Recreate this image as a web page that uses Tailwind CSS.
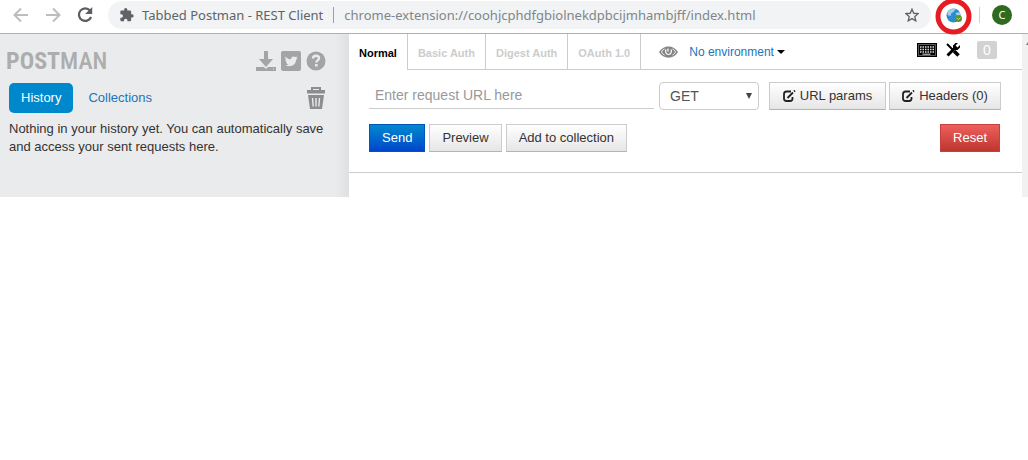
<!DOCTYPE html>
<html lang="en">
<head>
<meta charset="utf-8">
<meta name="viewport" content="width=device-width, initial-scale=1">
<title>Tabbed Postman - REST Client</title>
<script src="https://cdn.jsdelivr.net/npm/@tailwindcss/browser@4"></script>
</head>
<body class="bg-white font-['Liberation_Sans',Arial,sans-serif] text-[13px] leading-[18px] text-[#333]">

<!-- Browser toolbar -->
<header class="flex h-[34px] items-center border-b border-[#b0b0b4] pb-1 pl-[13px] pr-4 font-['Noto_Sans',sans-serif]">
  <button aria-label="Back" class="mr-4 shrink-0"><svg width="16" height="16" viewBox="0 0 16 16" fill="none" stroke="#bdbdbd" stroke-width="2"><path d="M15 8H2M8 1.500 1.500 8 8 14.500"/></svg></button>
  <button aria-label="Forward" class="mr-4 shrink-0"><svg width="16" height="16" viewBox="0 0 16 16" fill="none" stroke="#bdbdbd" stroke-width="2"><path d="M1 8h13M8 1.500 14.500 8 8 14.500"/></svg></button>
  <button aria-label="Reload" class="mr-[15px] shrink-0"><svg width="16" height="16" viewBox="0 0 16 16"><path d="M13 3.500A6.300 6.300 0 1 0 14.100 10" fill="none" stroke="#5a5d61" stroke-width="2.200"/><path d="M15.200 0v7H8.200z" fill="#5a5d61"/></svg></button>
  <div class="flex h-7 min-w-0 flex-1 items-center rounded-full bg-[#f1f3f4] px-3">
    <svg class="mr-2 shrink-0" width="14" height="14" viewBox="2 1 21 22" fill="#5f6368"><path d="M20.500 11H19V7c0-1.100-.9-2-2-2h-4V3.500a2.500 2.500 0 0 0-5 0V5H4c-1.100 0-2 .9-2 2v3.800h1.500a2.700 2.700 0 0 1 0 5.400H2V20c0 1.100.9 2 2 2h3.800v-1.500a2.700 2.700 0 0 1 5.400 0V22H17c1.100 0 2-.9 2-2v-4h1.500a2.500 2.500 0 0 0 0-5z"/></svg>
    <span class="whitespace-nowrap text-[13px] text-[#5f6368]">Tabbed Postman - REST Client</span>
    <span class="ml-[10px] mr-[10px] h-4 w-px bg-[#9aa0a6]"></span>
    <input aria-label="Address" class="h-6 min-w-0 flex-1 bg-transparent text-[13px] leading-6 text-[#80868b] outline-none" value="chrome-extension://coohjcphdfgbiolnekdpbcijmhambjff/index.html">
    <button aria-label="Bookmark"><svg width="14" height="14" viewBox="0 0 24 24" fill="none" stroke="#5f6368" stroke-width="2.300"><path d="m12 2 3 7 7.500.7-5.700 5 1.700 7.300L12 18.100 5.500 22l1.700-7.300-5.700-5L9 9z"/></svg></button>
  </div>
  <button aria-label="Postman extension" class="relative ml-1 h-7 w-9 shrink-0"><svg class="absolute left-0 -top-1 z-10" width="38" height="40" viewBox="0 0 38 40"><circle cx="18.500" cy="19.500" r="15.500" fill="#fff" stroke="#e51c23" stroke-width="5"/><circle cx="18.500" cy="18.500" r="7" fill="#2d8ccf"/><path d="M12.500 15c2-3 5-4 8-3l-2 3-2 1-1 3-3-1zM20.500 16l4-1 1 4-3 1z" fill="#9ed0ee"/><circle cx="23.500" cy="21.500" r="3.500" fill="#57932f"/><path d="m21.500 21 2 1.500 2-2" fill="none" stroke="#b9da8c"/></svg></button>
  <span class="mx-2 h-4 w-px bg-[#cfd1d4]"></span>
  <button class="ml-1 size-5 shrink-0 rounded-full bg-[#2f6b1e] text-[11px] leading-5 text-white">C</button>
</header>

<div class="flex">
  <!-- Sidebar -->
  <aside class="w-[349px] shrink-0 bg-linear-to-r from-[#eaebec] from-96% to-[#dfe0e1] pb-[41px]">
    <div class="flex h-[37px] items-end justify-between pl-[6px] pr-[23px] pt-3">
      <h1 class="whitespace-nowrap font-['Roboto_Condensed','Liberation_Sans_Narrow',sans-serif] text-[24px] font-medium leading-5 text-[#adadad]"><b>POST</b>MAN</h1>
      <div class="flex gap-[5px]">
        <button aria-label="Download"><svg width="20" height="20" viewBox="0 0 20 20" fill="#a4a4a4"><path d="M8 0h4v8h5l-7 8-7-8h5z"/><path d="M0 16h8l2 2 2-2h8v4H0zM17 17.500v1h1v-1z" fill-rule="evenodd"/></svg></button>
        <a href="#" aria-label="Twitter"><svg width="20" height="20" viewBox="0 0 20 20"><rect width="20" height="20" rx="2" fill="#a4a4a4"/><path d="M4.500 5.500c2 2.300 3.500 2.800 5.500 2.800 0-2.800 2.500-3.600 4.300-2.300l2-.5-1 1.800 1.200.2-1.500 1.500C15 14 9 17 4.500 14c1.500 0 2.500-.4 3-1-1.500 0-2.200-.8-2.500-1.800h1.200C4.800 10.700 4.300 9.500 4.300 8.500l1 .2C4.300 7.800 4 6.500 4.500 5.500z" fill="#eaebec"/></svg></a>
        <button aria-label="Help"><svg width="20" height="20" viewBox="0 0 20 20" fill="none"><circle cx="10" cy="10" r="9.500" fill="#a4a4a4"/><path d="M7 7.500C7 3.800 13 4 13 7.300c0 2.200-2.700 2-2.700 4.200" stroke="#eaebec" stroke-width="2.400"/><path d="M9 13h2.600v2.500H9z" fill="#eaebec"/></svg></button>
      </div>
    </div>
    <div class="mt-3 flex h-[30px] items-center pl-[9px] pr-6">
      <button class="h-[30px] rounded-[5px] bg-[#0088cc] px-3 text-white">History</button>
      <button class="ml-[3px] px-3 text-[#1a75bb]">Collections</button>
      <button aria-label="Delete history" class="ml-auto"><svg width="18" height="22" viewBox="0 0 18 22" fill="none"><path d="M5 3V1h8v2" stroke="#8d8d8d" stroke-width="2"/><path d="M0 3h18v3.500H0zM1 8h16l-2 14H3z" fill="#8d8d8d"/><path d="m5.500 11 .7 8.500M9 11v8.500M12.500 11l-.7 8.500" stroke="#eaebec" stroke-width="1.400"/></svg></button>
    </div>
    <p class="mt-[7px] pl-[9px] pr-5">Nothing in your history yet. You can automatically save and access your sent requests here.</p>
  </aside>

  <!-- Request builder -->
  <main class="min-w-0 flex-1">
    <nav class="flex h-9 text-[11px] font-bold text-[#ccc]">
      <button class="border-r border-[#ccc] px-[10px] pt-[2px] text-black">Normal</button>
      <button class="border-r border-b border-[#ccc] px-[10px] pt-[2px]">Basic Auth</button>
      <button class="border-r border-b border-[#ccc] px-[10px] pt-[2px]">Digest Auth</button>
      <button class="border-r border-b border-[#ccc] px-[10px] pt-[2px]">OAuth 1.0</button>
      <div class="flex flex-1 items-center border-b border-[#ccc] pl-[18px] pr-[25px] text-[12px] font-normal">
        <button aria-label="Quick look" class="mr-[11px]"><svg width="19" height="12" viewBox="0 0 19 12" fill="none"><path d="M0 6C4-1.500 15-1.500 19 6 15 13.500 4 13.500 0 6z" fill="#858585"/><path d="M5.500 3C1.700 5 1.700 7 5.500 9M13.500 3c3.800 2 3.800 4 0 6" stroke="#fff"/><path d="M7 3.500c-1 2 0 5 2.500 5s3.500-3 2.500-5" stroke="#fff" stroke-width="1.200"/><path d="M9 2.500v3" stroke="#fff" stroke-width="1.200"/></svg></button>
        <button class="flex items-center gap-[3px] text-[#1a75bb]">No environment <svg width="8" height="4" viewBox="0 0 8 4"><path d="M0 0h8L4 4z" fill="#000"/></svg></button>
        <button aria-label="Keyboard shortcuts" class="mb-1 ml-auto"><svg width="20" height="14" viewBox="0 0 20 14" fill="none"><path d="M0 0h20v14H0z" fill="#000"/><path d="M1.500 1.500h17v11h-17z" stroke="#999" stroke-width=".6"/><path d="M3 4h14M3 6.500h14M3 9h14" stroke="#ddd" stroke-width="1.300" stroke-dasharray="1.500 1"/><path d="M5.500 11.200h8" stroke="#ddd"/></svg></button>
        <button aria-label="Settings" class="mb-1 ml-[9px]"><svg width="14" height="14" viewBox="0 0 14 14" fill="none" stroke="#000"><path d="m1 1 6 6" stroke-width="2"/><path d="m8 8 4.500 4.500" stroke-width="3.500"/><path d="M1.500 12.500 9.500 4.500" stroke-width="3"/><path d="M12 0 9.500 2.500l2 2L14 2v2.500L11.500 7H9L7 5V2.500L9.500 0z" fill="#000" stroke="none"/></svg></button>
        <span class="mb-1 ml-[17px] h-[18px] w-5 rounded-[2px] bg-[#d2d2d2] text-center text-[14px] text-white">0</span>
      </div>
    </nav>
    <form class="border-b border-[#ccc] pb-5 pl-5 pr-[21px] pt-3">
      <div class="flex">
        <input aria-label="Request URL" placeholder="Enter request URL here" class="mr-[5px] h-[27px] min-w-0 flex-1 border-b border-[#ccc] px-[6px] text-[14px] outline-none placeholder:text-[#999]">
        <div class="relative mr-[10px] w-[100px]">
          <select aria-label="Method" class="h-7 w-full appearance-none rounded-[4px] border border-[#ccc] bg-white pl-[10px] text-[14px] text-[#555]"><option>GET</option><option>POST</option><option>PUT</option></select>
          <svg class="pointer-events-none absolute right-[7px] top-[11px]" width="6" height="6" viewBox="0 0 6 6"><path d="M0 0h6L3 6z" fill="#444"/></svg>
        </div>
        <button type="button" class="mr-[3px] flex h-7 w-[117px] items-center justify-center gap-1 border border-[#ccc] border-b-[#b3b3b3] bg-linear-to-b from-white to-[#e6e6e6]"><svg width="13" height="12" viewBox="0 0 13 12" fill="none" stroke="#222" stroke-width="1.800"><path d="M8 1.500H3.500Q1 1.500 1 4v4.500Q1 11 3.500 11H7q2.500 0 2.500-2.500V7"/><path d="m4.500 8 5.500-5.500M11 1.500l1-1"/></svg>URL params</button>
        <button type="button" class="flex h-7 w-[112px] items-center justify-center gap-1 border border-[#ccc] border-b-[#b3b3b3] bg-linear-to-b from-white to-[#e6e6e6]"><svg width="13" height="12" viewBox="0 0 13 12" fill="none" stroke="#222" stroke-width="1.800"><path d="M8 1.500H3.500Q1 1.500 1 4v4.500Q1 11 3.500 11H7q2.500 0 2.500-2.500V7"/><path d="m4.500 8 5.500-5.500M11 1.500l1-1"/></svg>Headers (0)</button>
      </div>
      <div class="mt-[14px] flex gap-1 pr-px">
        <button type="button" class="h-7 border border-[#0055bb] bg-linear-to-b from-[#0088cc] to-[#0044cc] px-3 text-white">Send</button>
        <button type="button" class="h-7 border border-[#ccc] border-b-[#b3b3b3] bg-linear-to-b from-white to-[#e6e6e6] px-3">Preview</button>
        <button type="button" class="h-7 border border-[#ccc] border-b-[#b3b3b3] bg-linear-to-b from-white to-[#e6e6e6] px-3">Add to collection</button>
        <button type="button" class="ml-auto h-7 border border-[#c7403b] bg-linear-to-b from-[#ee5f5b] to-[#bd362f] px-3 text-white">Reset</button>
      </div>
    </form>
  </main>

  <!-- Scrollbar gutter -->
  <div class="w-[6px] shrink-0 bg-[#f1f1f1] pt-2"><svg class="ml-auto" width="2" height="4" viewBox="0 0 2 4"><path d="M2 0v3H0z" fill="#777"/></svg></div>
</div>
</body>
</html>
